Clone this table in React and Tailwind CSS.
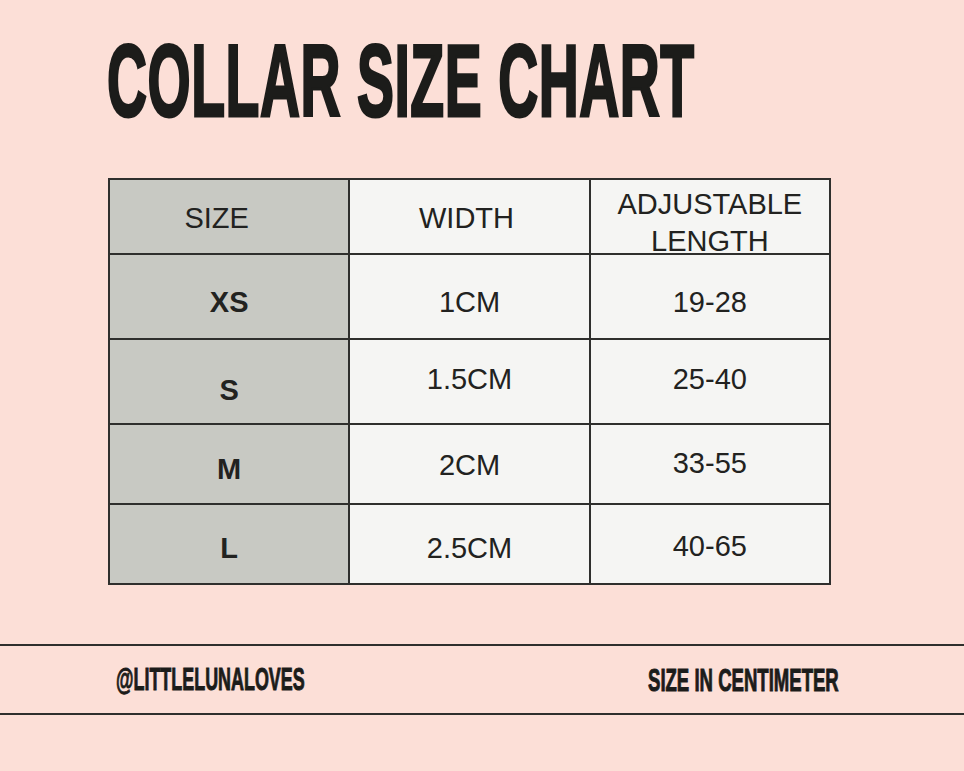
import React from 'react';

const rows = [
  { size: 'XS', width: '1CM', length: '19-28', pads: ['pt-[12px]', 'pt-[12px]', 'pt-[12px]'] },
  { size: 'S', width: '1.5CM', length: '25-40', pads: ['pt-[19px]', 'pb-[3px]', 'pb-[3px]'] },
  { size: 'M', width: '2CM', length: '33-55', pads: ['pt-[12px]', 'pt-[4px]', 'pt-0'] },
  { size: 'L', width: '2.5CM', length: '40-65', pads: ['pt-[10px]', 'pt-[10px]', 'pt-[6px]'] },
];

const heights = ['h-[83px]', 'h-[83px]', 'h-[78px]', 'h-[78px]'];

const App = () => {
  return (
    <main className="w-full h-[771px] overflow-hidden bg-[#fcdfd7] text-[#1c1c1a] font-['Liberation_Sans',Arial,sans-serif]">
      {/* Title */}
      <div className="pt-[30px] pl-[107px]">
        <h1 className="inline-block origin-left scale-x-[0.543] whitespace-nowrap text-[102px] leading-none font-bold tracking-[1px] [-webkit-text-stroke:3px_#1c1c1a]">
          COLLAR SIZE CHART
        </h1>
      </div>

      {/* Size table */}
      <div className="mt-[46px] ml-[108px] w-[723px] bg-[#2f2f2d] p-[2px] grid grid-cols-3 gap-[2px] text-[29px] text-[#222220]">
        <div className="h-[73px] bg-[#c8c9c3] flex items-center justify-center pr-[25px] pt-[4px]">SIZE</div>
        <div className="h-[73px] bg-[#f5f5f3] flex items-center justify-center pr-[6px] pt-[4px]">WIDTH</div>
        <div className="h-[73px] bg-[#f5f5f3] flex flex-col items-center justify-center leading-[37px] pt-[12px]">
          <span>ADJUSTABLE</span>
          <span>LENGTH</span>
        </div>

        {rows.map((r, i) => (
          <React.Fragment key={r.size}>
            <div className={`${heights[i]} bg-[#c8c9c3] flex items-center justify-center font-bold ${r.pads[0]}`}>{r.size}</div>
            <div className={`${heights[i]} bg-[#f5f5f3] flex items-center justify-center ${r.pads[1]}`}>{r.width}</div>
            <div className={`${heights[i]} bg-[#f5f5f3] flex items-center justify-center ${r.pads[2]}`}>{r.length}</div>
          </React.Fragment>
        ))}
      </div>

      {/* Footer band */}
      <div className="mt-[59px] h-[71px] border-y-2 border-[#2f2f2d] flex items-center pl-[116px] pt-[1px]">
        <div className="w-[532px] shrink-0">
          <span className="inline-block origin-left scale-x-[0.56] whitespace-nowrap text-[32px] leading-none font-bold [-webkit-text-stroke:1px_#1c1c1a]">
            @LITTLELUNALOVES
          </span>
        </div>
        <span className="inline-block origin-left scale-x-[0.58] whitespace-nowrap text-[32px] leading-none font-bold [-webkit-text-stroke:1px_#1c1c1a]">
          SIZE IN CENTIMETER
        </span>
      </div>
    </main>
  );
};

export default App;
